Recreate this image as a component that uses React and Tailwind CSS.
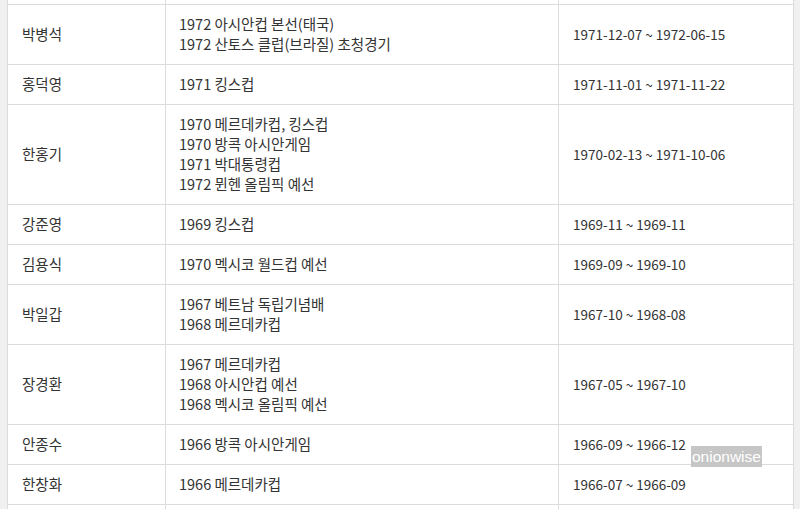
const rows = [
  { name: "박병석", events: ["1972 아시안컵 본선(태국)", "1972 산토스 클럽(브라질) 초청경기"], period: "1971-12-07 ~ 1972-06-15" },
  { name: "홍덕영", events: ["1971 킹스컵"], period: "1971-11-01 ~ 1971-11-22" },
  { name: "한홍기", events: ["1970 메르데카컵, 킹스컵", "1970 방콕 아시안게임", "1971 박대통령컵", "1972 뮌헨 올림픽 예선"], period: "1970-02-13 ~ 1971-10-06" },
  { name: "강준영", events: ["1969 킹스컵"], period: "1969-11 ~ 1969-11" },
  { name: "김용식", events: ["1970 멕시코 월드컵 예선"], period: "1969-09 ~ 1969-10" },
  { name: "박일갑", events: ["1967 베트남 독립기념배", "1968 메르데카컵"], period: "1967-10 ~ 1968-08" },
  { name: "장경환", events: ["1967 메르데카컵", "1968 아시안컵 예선", "1968 멕시코 올림픽 예선"], period: "1967-05 ~ 1967-10" },
  { name: "안종수", events: ["1966 방콕 아시안게임"], period: "1966-09 ~ 1966-12" },
  { name: "한창화", events: ["1966 메르데카컵"], period: "1966-07 ~ 1966-09" },
];

export default function App() {
  return (
    <div
      className="relative h-[509px] w-[800px] overflow-hidden bg-[#f0f0f0] pl-[7px] pr-[6px] text-[14.5px] leading-[20px] text-[#333]"
      style={{ fontFamily: '"Noto Sans CJK KR", "Noto Sans", sans-serif' }}
    >
      <table className="w-full table-fixed border-collapse bg-white">
        <colgroup>
          <col className="w-[158px]" />
          <col className="w-[393px]" />
          <col />
        </colgroup>
        <tbody>
          <tr className="h-[4px]">
            <td className="border border-t-0 border-[#dcdcdc] p-0" />
            <td className="border border-t-0 border-[#dcdcdc] p-0" />
            <td className="border border-t-0 border-[#dcdcdc] p-0" />
          </tr>
          {rows.map((r) => (
            <tr key={r.name}>
              <td className="border border-[#dcdcdc] px-[14px] pt-[9px] pb-[10px] align-middle">{r.name}</td>
              <td className="border border-[#dcdcdc] px-[13px] pt-[9px] pb-[10px] align-middle">
                {r.events.map((e) => (
                  <div key={e}>{e}</div>
                ))}
              </td>
              <td className="border border-[#dcdcdc] px-[14px] pt-[9px] pb-[10px] align-middle text-[13.5px]">{r.period}</td>
            </tr>
          ))}
          <tr className="h-[20px]">
            <td className="border border-[#dcdcdc] p-0" />
            <td className="border border-[#dcdcdc] p-0" />
            <td className="border border-[#dcdcdc] p-0" />
          </tr>
        </tbody>
      </table>
      <div
        className="absolute left-[691px] top-[446px] h-[21px] bg-[#c6c6c6] px-[1px] text-[15.5px] leading-[21px] text-white"
        style={{ fontFamily: '"Liberation Sans", sans-serif' }}
      >
        onionwise
      </div>
    </div>
  );
}
